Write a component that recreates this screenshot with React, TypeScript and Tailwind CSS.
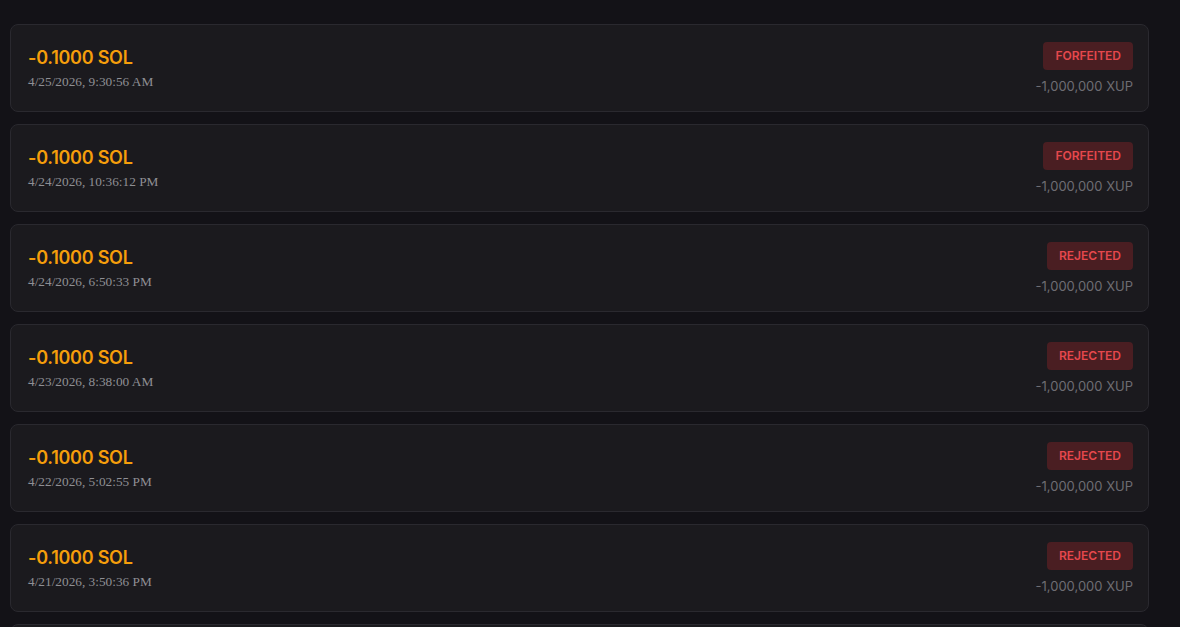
import React from 'react';

interface Withdrawal {
    amount: string;
    date: string;
    status: 'FORFEITED' | 'REJECTED';
    points: string;
}

const rows: Withdrawal[] = [
    { amount: '-0.1000 SOL', date: '4/25/2026, 9:30:56 AM', status: 'FORFEITED', points: '-1,000,000 XUP' },
    { amount: '-0.1000 SOL', date: '4/24/2026, 10:36:12 PM', status: 'FORFEITED', points: '-1,000,000 XUP' },
    { amount: '-0.1000 SOL', date: '4/24/2026, 6:50:33 PM', status: 'REJECTED', points: '-1,000,000 XUP' },
    { amount: '-0.1000 SOL', date: '4/23/2026, 8:38:00 AM', status: 'REJECTED', points: '-1,000,000 XUP' },
    { amount: '-0.1000 SOL', date: '4/22/2026, 5:02:55 PM', status: 'REJECTED', points: '-1,000,000 XUP' },
    { amount: '-0.1000 SOL', date: '4/21/2026, 3:50:36 PM', status: 'REJECTED', points: '-1,000,000 XUP' },
    { amount: '-0.1000 SOL', date: '4/20/2026, 1:12:09 PM', status: 'REJECTED', points: '-1,000,000 XUP' },
];

const App: React.FC = () => {
    return (
        <div className="h-[627px] overflow-hidden bg-[#131217] font-['Inter',sans-serif]">
            <div className="flex flex-col gap-3 pt-6 pl-[10px] pr-[31px]">
                {rows.map((row, i) => (
                    <div
                        key={i}
                        className="flex shrink-0 items-center justify-between h-[88px] pl-4 pr-[15px] rounded-lg border border-[#2a292f] bg-[#1b1a1e]"
                    >
                        <div className="flex flex-col gap-1 pl-[1px]">
                            <span className="text-[18px] leading-6 font-semibold tracking-[-0.25px] text-[#f59e0b]">{row.amount}</span>
                            <span className="text-[13.3px] leading-4 text-[#8f8f94] font-['Liberation_Serif',serif]">{row.date}</span>
                        </div>
                        <div className="flex flex-col items-end gap-1.5 pt-[2px]">
                            <span className="rounded px-3 py-1.5 text-[12px] leading-4 font-semibold text-[#e5484d] bg-[#4a1e22]">
                                {row.status}
                            </span>
                            <span className="text-[13px] leading-5 text-[#6e6d73]">{row.points}</span>
                        </div>
                    </div>
                ))}
            </div>
        </div>
    );
};

export default App;
